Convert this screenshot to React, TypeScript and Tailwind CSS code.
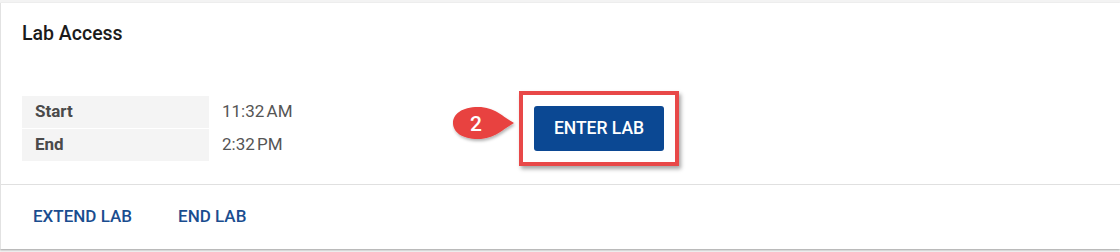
import React from "react";

export default function App() {
  return (
    <div className="w-[1120px] h-[252px] bg-[#f3f3f3] pt-[3px] overflow-hidden" style={{ fontFamily: "Roboto, 'Liberation Sans', sans-serif" }}>
      <div className="bg-white border-l border-[#e2e2e2] h-[246px] flex flex-col shadow-[0_1px_2px_rgba(0,0,0,0.35)]">
        <div className="h-[181px] px-[21px] pt-[18px] flex flex-col">
          <div className="text-[19.5px] leading-[26px] font-medium text-[#1b1b1b]">Lab Access</div>
          <div className="flex items-center mt-[44px]">
            <div className="flex flex-col gap-[1px] w-[300px]">
              <div className="flex items-center h-[32px]">
                <div className="w-[187px] h-full bg-[#f4f4f4] pl-[13px] flex items-center text-[17px] font-bold text-[#4a4a4a]">Start</div>
                <div className="pl-[13px] text-[17px] text-[#555]">11:32<span className="tracking-[-2px]"> </span>AM</div>
              </div>
              <div className="flex items-center h-[32px]">
                <div className="w-[187px] h-full bg-[#f4f4f4] pl-[13px] flex items-center text-[17px] font-bold text-[#4a4a4a]">End</div>
                <div className="pl-[13px] text-[17px] text-[#555]">2:32<span className="tracking-[-2px]"> </span>PM</div>
              </div>
            </div>
            <div className="ml-[130px] relative w-[64px] h-[40px] self-center -mt-[5px]">
              <svg width="66" height="42" viewBox="0 0 66 42" className="absolute left-0 top-0">
                <defs>
                  <filter id="sh" x="-20%" y="-20%" width="140%" height="160%">
                    <feDropShadow dx="1" dy="2" stdDeviation="1.5" floodColor="#000" floodOpacity="0.3" />
                  </filter>
                </defs>
                <path d="M62 17 C51 11 43 1 26 1 C10 1 1 8 1 17 C1 26 10 33 26 33 C43 33 51 23 62 17 Z" fill="#e8423f" filter="url(#sh)" />
              </svg>
              <span className="absolute left-[15px] top-[4px] w-[18px] text-center text-white text-[21px] leading-[28px] font-medium">2</span>
            </div>
            <div className="ml-[3px] border-[4px] border-[#e84848] p-[11px] shadow-[2px_3px_4px_rgba(0,0,0,0.35)]">
              <button className="w-[130px] h-[45px] rounded-[3px] bg-[#0b4893] text-white text-[17.5px] font-medium flex items-center justify-center">ENTER LAB</button>
            </div>
          </div>
        </div>
        <div className="border-t border-[#e0e0e0] flex-1 flex items-center pl-[32px] gap-[46px] text-[17px] font-medium text-[#1a4d8f]">
          <span>EXTEND LAB</span>
          <span>END LAB</span>
        </div>
      </div>
    </div>
  );
}
